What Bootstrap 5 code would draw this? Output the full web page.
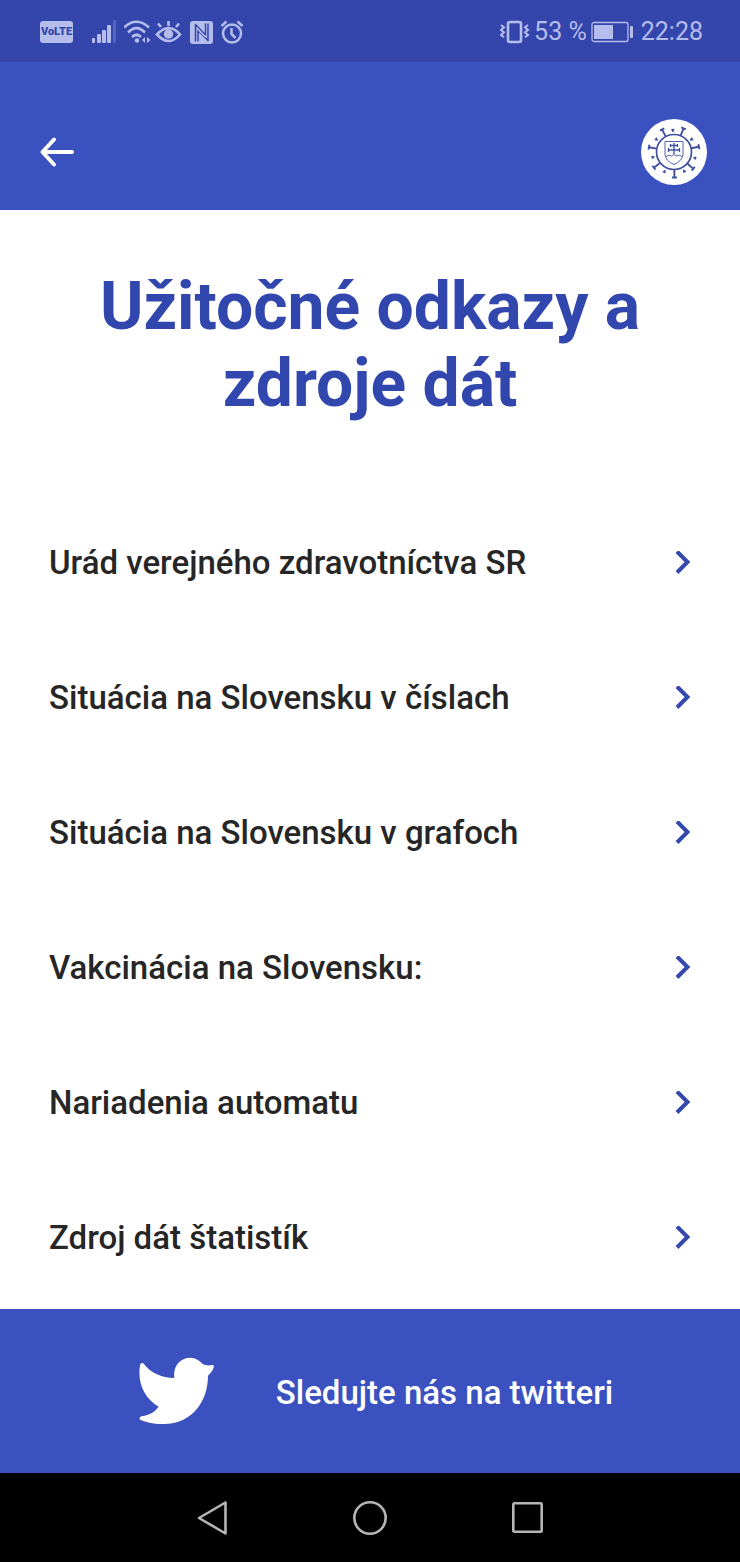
<!DOCTYPE html>
<html lang="sk">
<head>
<meta charset="utf-8">
<meta name="viewport" content="width=device-width, initial-scale=1">
<title>Užitočné odkazy a zdroje dát</title>
<link href="https://cdn.jsdelivr.net/npm/bootstrap@5.3.0/dist/css/bootstrap.min.css" rel="stylesheet">
<style>
  body { font-family: Roboto, "Noto Sans", sans-serif; color: #262626; }
  svg { display: block; flex: none; }
  .status { height: 62px; background: #3446ac; color: #b4bdec; font-size: 25px; line-height: 30px; padding: 1px 37px 0 40px; }
  .volte { width: 33px; height: 22px; border-radius: 3px; background: #b4bdec; color: #3446ac; font-size: 11px; line-height: 22px; font-weight: 900; }
  .topbar { height: 148px; background: #3a51bf; padding: 32px 33px 0 40px; }
  .page-title { color: #3247ad; font-size: 66px; line-height: 77px; font-weight: 700; padding: 58px 64px 73px; }
  .links { --bs-list-group-bg: #fff; padding-bottom: 4px; }
  .links .list-group-item { height: 135px; padding: 0 49px; border: 0; font-size: 33px; line-height: 40px; font-weight: 500; color: #262626; }
  .follow { height: 164px; background: #3a51bf; color: #fff; font-size: 33px; line-height: 40px; font-weight: 500; gap: 61px; padding-left: 12px; }
  .softkeys { height: 89px; gap: 125px; }
</style>
</head>
<body class="min-vh-100 d-flex flex-column bg-white">

<div class="status d-flex align-items-center justify-content-between">
  <div class="d-flex align-items-center">
    <span class="volte text-center">VoLTE</span>
    <svg class="ms-3" width="31" height="24" viewBox="0 0 31 24" fill="#b4bdec">
      <rect x="3" y="18" width="3" height="5" rx="1"/><rect x="8" y="14" width="4" height="9" rx="1"/><rect x="13" y="10" width="4" height="13" rx="1"/><rect x="18" y="5" width="4" height="18" rx="1"/><rect x="24" y="0" width="3" height="23" rx="1" opacity=".25"/>
    </svg>
    <svg class="ms-1" width="27" height="24" viewBox="0 0 27 24" fill="none" stroke="#b4bdec" stroke-width="2.6">
      <path d="M0 7.500Q12.500-4 25 7.500M4 12.500Q12.500 4 21 12.500M8 17Q12.500 12.500 17 17"/>
      <circle cx="13" cy="20.500" r="2.300" fill="#b4bdec" stroke="none"/>
      <path d="M21 17v6l-3-3zM23 17v6l3.500-3z" fill="#b4bdec" stroke="none"/>
    </svg>
    <svg class="ms-1" width="27" height="24" viewBox="0 0 27 24" fill="none" stroke="#b4bdec" stroke-width="2.600">
      <path d="M2 14.500Q14 1.500 25 14.500Q14 27.500 2 14.500zM13.500 6V1M6 7L3 3.500M21 7l3-3.500"/>
      <circle cx="13.500" cy="14" r="4.700" fill="#b4bdec" stroke="none"/>
    </svg>
    <svg class="ms-2" width="23" height="24" viewBox="0 0 23 24">
      <rect x="0" y="1" width="23" height="23" rx="3" fill="#b4bdec"/>
      <path d="M5.500 21.500V4.500L15.500 15V3.500M8 21.500V10.500L18 20.500V3.500" fill="none" stroke="#3446ac" stroke-width="1.500" stroke-linejoin="round"/>
      <path d="M7.300 7.500L15.500 16v2L8.500 11z" fill="#b4bdec"/>
    </svg>
    <svg class="ms-2" width="24" height="24" viewBox="0 0 24 24" fill="none" stroke="#b4bdec" stroke-width="2.500">
      <circle cx="11" cy="13.500" r="9"/><path d="M10.500 8v6l4 4M.500 6l5-4.500M21.500 6l-5-4.500"/>
    </svg>
  </div>
  <div class="d-flex align-items-center">
    <svg class="me-1" width="30" height="24" viewBox="0 0 30 24" fill="none" stroke="#b4bdec" stroke-width="2.600">
      <rect x="8" y="2" width="13" height="20" rx="2"/>
      <path d="M1 5l3 2.300L1 10l3 2.300L1 15l3 2.300M28 5l-3 2.300 3 2.700-3 2.300 3 2.700-3 2.300" stroke-width="2"/>
    </svg>
    <span>53 %</span>
    <svg class="ms-1 me-2" width="42" height="22" viewBox="0 0 42 22" fill="none">
      <rect x="1" y="1.500" width="36" height="19" rx="2" stroke="#b4bdec" stroke-width="1.300"/>
      <rect x="3" y="4" width="19" height="14" fill="#b4bdec"/><rect x="39" y="5" width="3" height="12" rx="1" fill="#b4bdec"/>
    </svg>
    <span>22:28</span>
  </div>
</div>

<header class="topbar d-flex align-items-center justify-content-between">
  <button type="button" class="btn border-0 p-0" aria-label="Späť">
    <svg width="34" height="30" viewBox="0 0 34 30" fill="none" stroke="#fff" stroke-width="4" stroke-linecap="round" stroke-linejoin="round"><path d="M14 2.500L2.500 15 14 27.500M3 15h29"/></svg>
  </button>
  <svg width="66" height="66" viewBox="-33 -33 66 66" fill="none" stroke="#40509f">
    <defs>
      <path id="spike" d="M0-18V-25M-2.500-25.500H2.500" stroke-width="1.900"/>
      <path id="bud" d="M0-20V-22M-1.500-22.300H1.500" stroke-width="1.600"/>
    </defs>
    <circle r="33" fill="#fff" stroke="none"/>
    <circle r="17.500" stroke-width="1.700"/>
    <use href="#spike" transform="rotate(22)"/><use href="#spike" transform="rotate(78)"/><use href="#spike" transform="rotate(131)"/><use href="#spike" transform="rotate(179)"/><use href="#spike" transform="rotate(232)"/><use href="#spike" transform="rotate(281)"/><use href="#spike" transform="rotate(332)"/>
    <use href="#bud" transform="rotate(-3)"/><use href="#bud" transform="rotate(54)"/><use href="#bud" transform="rotate(106)"/><use href="#bud" transform="rotate(152)"/><use href="#bud" transform="rotate(206)"/><use href="#bud" transform="rotate(256)"/><use href="#bud" transform="rotate(306)"/>
    <path d="M-9-10.500H9V3Q8 9 0 12.500Q-8 9-9 3zM-8 4.500Q-5 2-2.500 4Q0 1 2.500 4Q5 2 8 4.500" stroke-width=".9"/>
    <path d="M0-9V2M-3.500-6.500h7M-5.500-2h11M-3.500-8v3M3.500-8v3M-5.500-4v4M5.500-4v4" stroke-width="1.300"/>
  </svg>
</header>

<main class="flex-grow-1">
  <h1 class="page-title text-center mb-0">Užitočné odkazy a zdroje dát</h1>
  <nav class="links list-group list-group-flush">
    <a href="#" class="list-group-item d-flex align-items-center justify-content-between">Urád verejného zdravotníctva SR<svg width="16" height="24" viewBox="0 0 16 24" fill="none" stroke="#3449ae" stroke-width="4"><path d="M2 .500L12.500 11 2 21.500"/></svg></a>
    <a href="#" class="list-group-item d-flex align-items-center justify-content-between">Situácia na Slovensku v číslach<svg width="16" height="24" viewBox="0 0 16 24" fill="none" stroke="#3449ae" stroke-width="4"><path d="M2 .500L12.500 11 2 21.500"/></svg></a>
    <a href="#" class="list-group-item d-flex align-items-center justify-content-between">Situácia na Slovensku v grafoch<svg width="16" height="24" viewBox="0 0 16 24" fill="none" stroke="#3449ae" stroke-width="4"><path d="M2 .500L12.500 11 2 21.500"/></svg></a>
    <a href="#" class="list-group-item d-flex align-items-center justify-content-between">Vakcinácia na Slovensku:<svg width="16" height="24" viewBox="0 0 16 24" fill="none" stroke="#3449ae" stroke-width="4"><path d="M2 .500L12.500 11 2 21.500"/></svg></a>
    <a href="#" class="list-group-item d-flex align-items-center justify-content-between">Nariadenia automatu<svg width="16" height="24" viewBox="0 0 16 24" fill="none" stroke="#3449ae" stroke-width="4"><path d="M2 .500L12.500 11 2 21.500"/></svg></a>
    <a href="#" class="list-group-item d-flex align-items-center justify-content-between">Zdroj dát štatistík<svg width="16" height="24" viewBox="0 0 16 24" fill="none" stroke="#3449ae" stroke-width="4"><path d="M2 .500L12.500 11 2 21.500"/></svg></a>
  </nav>
</main>

<a href="#" class="follow d-flex align-items-center justify-content-center text-decoration-none">
  <svg width="76" height="68" viewBox="57 50 228 204" fill="#fff"><path d="M60 75Q62 66 70 69C90 97 124 113 163 113C158 77 181 52 211 52C226 52 238 59 248 71C258 76 268 76 277 74Q284 74 281 81C278 91 272 99 264 106C264 182 218 250 131 251C102 252 76 245 60 238Q56 232 64 228C84 225 103 217 116 199C72 173 52 127 60 75Z"/></svg>
  <span class="pt-1">Sledujte nás na twitteri</span>
</a>

<footer class="softkeys bg-black d-flex align-items-center justify-content-center">
  <button type="button" class="btn border-0 p-0" aria-label="Naspäť"><svg width="31" height="36" viewBox="0 0 31 36" fill="none" stroke="#b5b5b5" stroke-width="2.600" stroke-linejoin="round"><path d="M28.500 2.500v31L2 18z"/></svg></button>
  <button type="button" class="btn border-0 p-0" aria-label="Domov"><svg width="34" height="34" viewBox="0 0 34 34" fill="none" stroke="#b5b5b5" stroke-width="2.600"><circle cx="17" cy="17" r="15.700"/></svg></button>
  <button type="button" class="btn border-0 p-0" aria-label="Prehľad"><svg width="31" height="31" viewBox="0 0 31 31" fill="none" stroke="#b5b5b5" stroke-width="2.600"><rect x="1.300" y="1.300" width="28.400" height="28.400" rx="1"/></svg></button>
</footer>

<script src="https://cdn.jsdelivr.net/npm/bootstrap@5.3.0/dist/js/bootstrap.bundle.min.js"></script>
</body>
</html>
